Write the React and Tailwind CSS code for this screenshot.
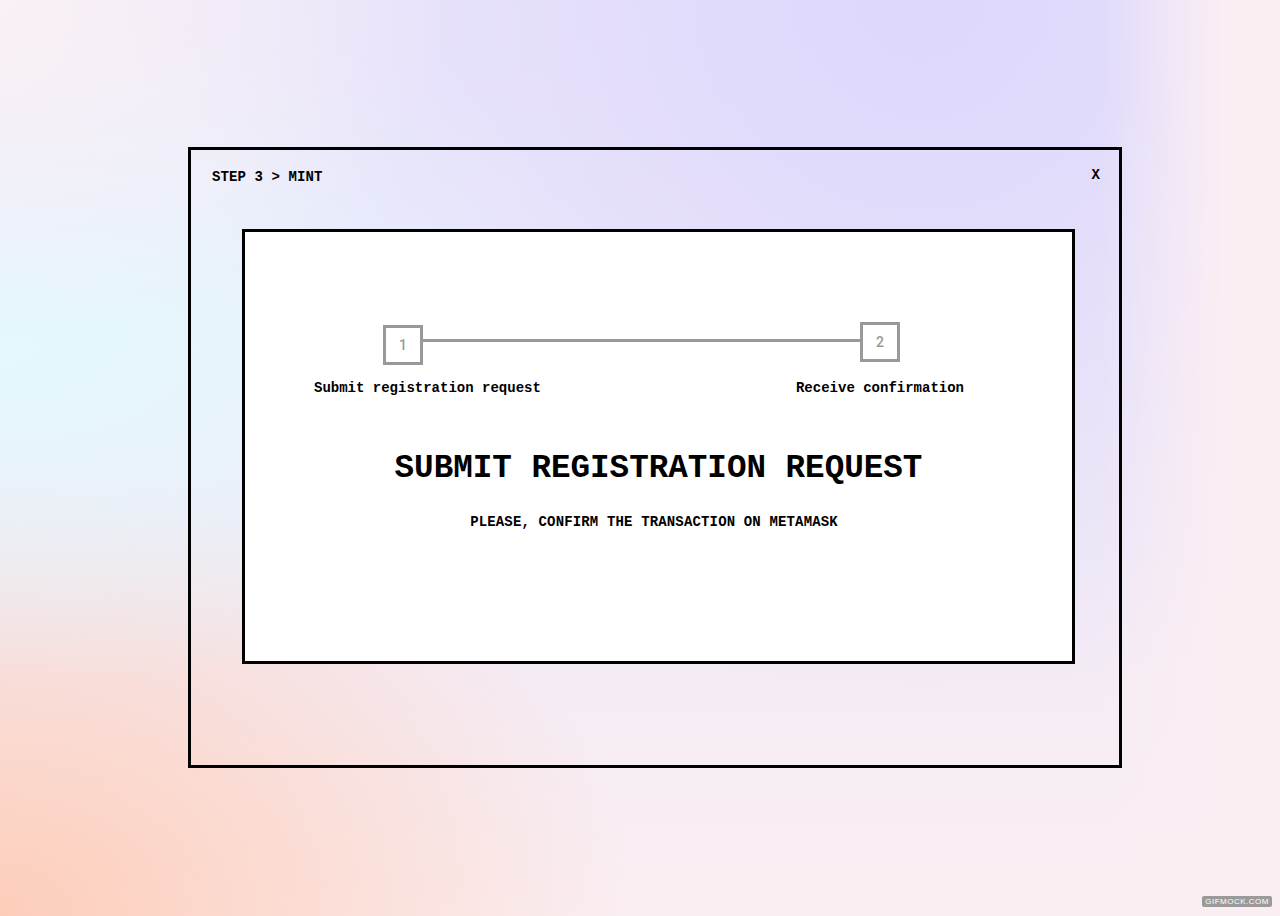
export default function App() {
    const mono = { fontFamily: '"Liberation Mono", "DejaVu Sans Mono", monospace' };

    return (
        <div
            className="relative w-full h-[916px] overflow-hidden bg-[linear-gradient(90deg,rgba(251,239,243,0)_86%,#fbeef3_96%),radial-gradient(ellipse_at_0%_0%,#faf1f5_0%,rgba(250,241,245,0)_25%),radial-gradient(ellipse_at_72%_0%,#ddd7fc_0%,rgba(221,215,252,0)_55%),radial-gradient(ellipse_at_0%_38%,#e4f8fd_0%,rgba(228,248,253,0)_42%),radial-gradient(ellipse_at_0%_100%,#fdcdb9_0%,rgba(253,205,185,0)_35%),linear-gradient(180deg,#ebe6fb_0%,#f1eaf6_60%,#faeef2_100%)] pt-[147px]"
            style={mono}
        >
            {/* Outer frame */}
            <div className="ml-[188px] w-[934px] h-[621px] border-[3px] border-black flex flex-col">
                <div className="flex justify-between items-start px-[21px] pt-[17px]">
                    <span className="text-[14px] font-bold leading-5 tracking-[0.1px] text-black">STEP 3 &gt; MINT</span>
                    <button className="text-[14px] font-bold leading-5 text-black -mt-[2px] -mr-[2px]">X</button>
                </div>

                {/* Inner card */}
                <div className="ml-[51px] mt-[42px] w-[833px] h-[435px] border-[3px] border-black bg-white flex flex-col">
                    <div className="flex items-start pt-[90px] pl-[138px] pr-[172px]">
                        <div className="mt-[3px] w-[40px] h-[40px] border-[3px] border-[#999999] flex items-center justify-center text-[14px] font-medium text-[#999999]" style={{ fontFamily: 'Roboto, "Noto Sans", sans-serif' }}>1</div>
                        <div className="flex-1 mt-[17px] h-[3px] bg-[#999999]"></div>
                        <div className="w-[40px] h-[40px] border-[3px] border-[#999999] flex items-center justify-center text-[14px] font-medium text-[#999999]" style={{ fontFamily: 'Roboto, "Noto Sans", sans-serif' }}>2</div>
                    </div>
                    <div className="flex mt-[13px] text-[14px] font-bold leading-5 text-black">
                        <span className="ml-[69px]">Submit registration request</span>
                        <span className="ml-auto mr-[108px]">Receive confirmation</span>
                    </div>

                    <h1 className="mt-[51px] text-center text-[32.6px] font-bold leading-10 text-black">SUBMIT REGISTRATION REQUEST</h1>
                    <p className="mt-[23px] pr-[9px] text-center text-[14px] font-bold leading-5 tracking-[0.15px] text-black">PLEASE, CONFIRM THE TRANSACTION ON METAMASK</p>
                </div>
            </div>

            <div className="absolute right-[8px] bottom-[9px] rounded-[2px] bg-[#9a9a9a] px-[3px] text-[8px] leading-[11px] tracking-[0.5px] text-white" style={{ fontFamily: '"Liberation Sans", Arial, sans-serif' }}>GIFMOCK.COM</div>
        </div>
    );
}
